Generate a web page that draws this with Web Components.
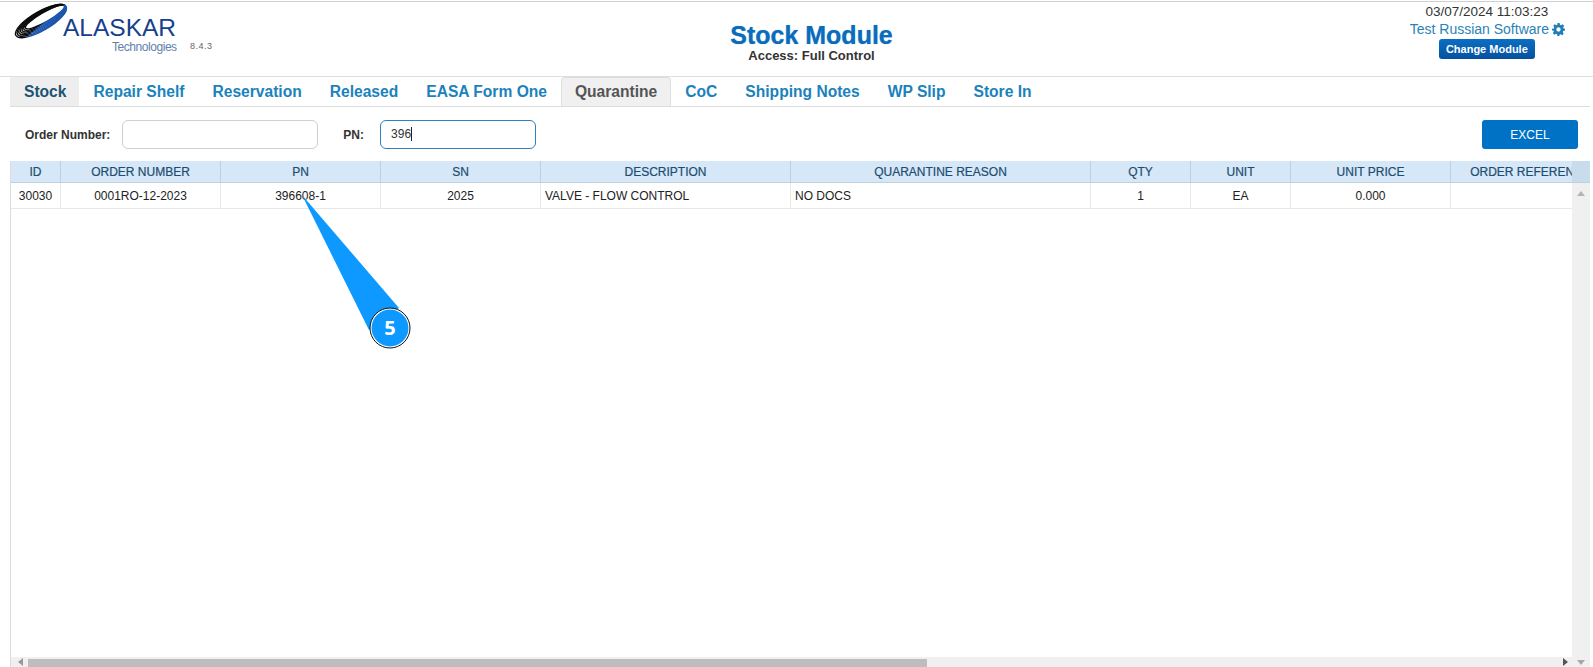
<!DOCTYPE html>
<html>
<head>
<meta charset="utf-8">
<title>Stock Module</title>
<style>
  html, body { margin: 0; height: 100%; overflow: hidden; background: #fff; }
  body { font-family: "Liberation Sans", Arial, sans-serif; position: relative; }
</style>
</head>
<body>
<stock-header></stock-header>
<tab-bar>
  <tab-item active>Stock</tab-item>
  <tab-item>Repair Shelf</tab-item>
  <tab-item>Reservation</tab-item>
  <tab-item>Released</tab-item>
  <tab-item>EASA Form One</tab-item>
  <tab-item selected>Quarantine</tab-item>
  <tab-item>CoC</tab-item>
  <tab-item>Shipping Notes</tab-item>
  <tab-item>WP Slip</tab-item>
  <tab-item>Store In</tab-item>
</tab-bar>
<filter-bar></filter-bar>
<data-grid></data-grid>
<step-callout></step-callout>

<script>
// Header: logo on the left, module title in the middle, session info on the right.
class StockHeader extends HTMLElement {
  constructor() {
    super();
    this.attachShadow({ mode: 'open' });
    // Logo rings: each one is a bit smaller and slides to the upper right.
    let rings = '';
    for (let i = 0; i < 7; i++) {
      rings += `<ellipse cx="${27 + i * 0.9}" cy="${17 - i * 0.25}" rx="${29 - i * 1.1}" ry="${9.5 - i * 0.8}"/>`;
    }
    this.shadowRoot.innerHTML = `
      <style>
        :host {
          display: grid;
          grid-template-columns: 1fr auto 1fr;
          height: 74px;
          margin-top: 1px;
          border-top: 1px solid #d0d0d0;
          border-bottom: 1px solid #dedede;
          box-sizing: content-box;
        }
        #logo { display: flex; align-items: flex-start; padding: 2px 0 0 14px; }
        #ring { flex: none; overflow: visible; }
        #brand { margin: 14px 0 0 -5px; width: 115px; }
        #name {
          font-size: 24.5px;
          line-height: 20px;
          color: #173f8c;
          font-weight: 400;
          white-space: nowrap;
        }
        #tech {
          font-size: 12px;
          line-height: 14px;
          letter-spacing: -0.45px;
          color: #5f82ab;
          margin: 2px 0 0 49px;
          white-space: nowrap;
        }
        #version { font-size: 9px; color: #666; margin: 37px 0 0 12px; letter-spacing: .5px; }
        #title { text-align: center; padding: 18px 0 0 30px; }
        #title h1 {
          margin: 0;
          font-size: 25px;
          line-height: 30px;
          font-weight: 700;
          color: #0b6cbb;
          text-shadow: 0 0 1px #6aa3d8;
        }
        #title p { margin: -2px 0 0; font-size: 13px; line-height: 15px; font-weight: 700; color: #333; }
        #session {
          justify-self: end;
          display: flex;
          flex-direction: column;
          align-items: center;
          padding: 1px 28px 0 0;
          font-size: 14px;
          line-height: 18px;
        }
        #date { color: #333; font-size: 13.5px; line-height: 17px; }
        #user { color: #2a83b5; display: flex; align-items: center; gap: 3px; padding-left: 1px; }
        #change {
          margin-top: 1px;
          width: 96px;
          height: 20px;
          border: 0;
          border-radius: 3px;
          padding: 0;
          font: 700 11px "Liberation Sans", Arial, sans-serif;
          color: #fff;
          background: linear-gradient(#0a6fc4, #07509f);
        }
      </style>
      <div id="logo">
        <svg id="ring" width="54" height="34" viewBox="0 0 54 34">
          <defs>
            <linearGradient id="g" x1="20" y1="10" x2="23" y2="26" gradientUnits="userSpaceOnUse">
              <stop offset="0.62" stop-color="#0b0b0b"/>
              <stop offset="0.72" stop-color="#1a54ad"/>
              <stop offset="1" stop-color="#1a54ad"/>
            </linearGradient>
          </defs>
          <g fill="none" stroke="url(#g)" stroke-width="1.4" transform="rotate(-30 27 17)">${rings}</g>
        </svg>
        <div id="brand">
          <div id="name">ALASKAR</div>
          <div id="tech">Technologies</div>
        </div>
        <span id="version">8.4.3</span>
      </div>
      <div id="title">
        <h1>Stock Module</h1>
        <p>Access: Full Control</p>
      </div>
      <div id="session">
        <span id="date">03/07/2024 11:03:23</span>
        <span id="user">Test Russian Software
          <svg width="13" height="13" viewBox="0 0 24 24"><path fill="#1f7db8" fill-rule="evenodd" d="M10 0h4l.7 3.3 2 .8L19.600 2.300l2.800 2.800-1.800 2.900.8 2L24 10.700v3.300l-3.400.7-.8 2 1.800 2.900-2.800 2.800-2.900-1.800-2 .8L14 24h-4l-.7-3.400-2-.8-2.900 1.800-2.800-2.800 1.800-2.900-.8-2L0 14v-3.300l3.300-.7.8-2-1.800-2.900 2.800-2.800 2.900 1.800 2-.8zM12 8a4 4 0 1 0 0 8 4 4 0 0 0 0-8z"/></svg>
        </span>
        <button id="change">Change Module</button>
      </div>
    `;
  }
}
customElements.define('stock-header', StockHeader);

// Row of module tabs, the tabs themselves come in through the slot.
class TabBar extends HTMLElement {
  constructor() {
    super();
    this.attachShadow({ mode: 'open' });
    this.shadowRoot.innerHTML = `
      <style>
        :host {
          display: flex;
          height: 29px;
          margin: 0 3px 0 10px;
          border-bottom: 1px solid #dcdcdc;
        }
      </style>
      <slot></slot>
    `;
  }
}
customElements.define('tab-bar', TabBar);

class TabItem extends HTMLElement {
  constructor() {
    super();
    this.attachShadow({ mode: 'open' });
    this.shadowRoot.innerHTML = `
      <style>
        :host {
          display: block;
          padding: 0 14px;
          font-size: 15.6px;
          font-weight: 700;
          line-height: 29px;
          color: #1b82bb;
          white-space: nowrap;
        }
        :host([active]) { background: #eeeeee; color: #1d5273; padding-right: 13px; }
        :host([selected]) {
          background: #f0f0f0;
          color: #555;
          border: 1px solid #dedede;
          border-bottom: 0;
          border-radius: 4px 4px 0 0;
          padding: 0 13px;
          line-height: 28px;
        }
      </style>
      <slot></slot>
    `;
  }
}
customElements.define('tab-item', TabItem);

// Search inputs plus the export button.
class FilterBar extends HTMLElement {
  constructor() {
    super();
    this.attachShadow({ mode: 'open' });
    this.shadowRoot.innerHTML = `
      <style>
        :host {
          display: flex;
          align-items: center;
          height: 29px;
          padding: 13px 15px 12px 25px;
          font-size: 12px;
          font-weight: 700;
          color: #333;
        }
        label { white-space: nowrap; }
        .box {
          box-sizing: border-box;
          height: 29px;
          border: 1px solid #cfcfcf;
          border-radius: 6px;
          background: #fff;
          padding: 0 10px;
          font: 400 12px/27px "Liberation Sans", Arial, sans-serif;
          color: #333;
        }
        #order { width: 196px; margin: 0 25px 0 12px; }
        #pn { width: 156px; margin-left: 16px; border-color: #2f80bd; }
        #caret { display: inline-block; width: 1px; height: 14px; background: #222; vertical-align: -3px; }
        button {
          margin-left: auto;
          width: 96px;
          height: 29px;
          border: 0;
          border-radius: 3px;
          background: #0072c6;
          color: #fff;
          font: 400 12px "Liberation Sans", Arial, sans-serif;
        }
      </style>
      <label>Order Number:</label>
      <div class="box" id="order"></div>
      <label>PN:</label>
      <div class="box" id="pn">396<span id="caret"></span></div>
      <button>EXCEL</button>
    `;
  }
}
customElements.define('filter-bar', FilterBar);

// The results grid.  Scrollbars are drawn by hand so they look like the old
// themed ones instead of whatever the browser gives.
class DataGrid extends HTMLElement {
  constructor() {
    super();
    this.attachShadow({ mode: 'open' });
    const columns = [
      ['ID', 50], ['ORDER NUMBER', 160], ['PN', 160], ['SN', 160],
      ['DESCRIPTION', 250, 'left'], ['QUARANTINE REASON', 300, 'left'],
      ['QTY', 100], ['UNIT', 100], ['UNIT PRICE', 160], ['ORDER REFERENCE', 160],
    ];
    const row = ['30030', '0001RO-12-2023', '396608-1', '2025', 'VALVE - FLOW CONTROL', 'NO DOCS', '1', 'EA', '0.000', ''];
    const tracks = columns.map((c) => c[1] + 'px').join(' ');
    const head = columns.map((c) => `<div class="th">${c[0]}</div>`).join('');
    const cells = row.map((v, i) => `<div class="td ${columns[i][2] || ''}">${v}</div>`).join('');
    this.shadowRoot.innerHTML = `
      <style>
        :host {
          display: flex;
          flex-direction: column;
          height: 506px;
          margin: 0 3px 0 10px;
          border-left: 1px solid #dcdcdc;
          font-size: 12px;
          overflow: hidden;
        }
        #top { display: flex; height: 22px; flex: none; }
        #mid { display: flex; flex: 1; min-height: 0; }
        .clip { flex: 1; min-width: 0; overflow: hidden; }
        .cols { display: grid; grid-template-columns: ${tracks}; width: max-content; }
        .th {
          background: #d6e8f7;
          color: #1d4d70;
          line-height: 22px;
          text-align: center;
          border-right: 1px solid #bcd0e0;
          border-bottom: 1px solid #bcd0e0;
          box-sizing: border-box;
          height: 22px;
          white-space: nowrap;
          overflow: hidden;
          -webkit-text-stroke: 0.2px #1d4d70;
        }
        .td {
          box-sizing: border-box;
          height: 26px;
          line-height: 26px;
          color: #222;
          text-align: center;
          border-right: 1px solid #e8e8e8;
          border-bottom: 1px solid #e8e8e8;
        }
        .td.left { text-align: left; padding-left: 4px; }
        #corner { width: 18px; background: #c8dcec; border-bottom: 1px solid #bcd0e0; box-sizing: border-box; }
        #vbar { width: 18px; background: #f0f0f0; display: flex; flex-direction: column; align-items: center; }
        #up { width: 0; height: 0; border: 4px solid transparent; border-bottom: 5px solid #b5b5b5; border-top: 0; margin-top: 8px; }
        #hbar { height: 10px; flex: none; background: #f0f0f0; display: flex; align-items: flex-end; }
        #left { width: 0; height: 0; border: 4px solid transparent; border-right: 5px solid #9a9a9a; border-left: 0; margin: 0 2px 0 7px; align-self: center; }
        #thumb { width: 899px; height: 8px; background: #bdbdbd; margin-left: 3px; }
        #right { width: 0; height: 0; border: 4px solid transparent; border-left: 5px solid #555; border-right: 0; margin-left: auto; margin-right: 9px; align-self: center; }
        #foot { width: 0; height: 0; border: 4px solid transparent; border-top: 5px solid #a8a8a8; border-bottom: 0; margin-right: 5px; align-self: center; }
      </style>
      <div id="top">
        <div class="clip"><div class="cols">${head}</div></div>
        <div id="corner"></div>
      </div>
      <div id="mid">
        <div class="clip"><div class="cols">${cells}</div></div>
        <div id="vbar"><div id="up"></div></div>
      </div>
      <div id="hbar">
        <div id="left"></div><div id="thumb"></div>
        <div id="right"></div><div id="foot"></div>
      </div>
    `;
  }
}
customElements.define('data-grid', DataGrid);

// Numbered tutorial pin that sits over the page, pointing at the PN value.
class StepCallout extends HTMLElement {
  constructor() {
    super();
    this.attachShadow({ mode: 'open' });
    this.shadowRoot.innerHTML = `
      <style>
        :host { display: block; position: absolute; left: 295px; top: 190px; width: 120px; height: 165px; }
        svg { display: block; }
        text { font: 700 20px "Open Sans", "Liberation Sans", sans-serif; fill: #fff; }
      </style>
      <svg width="120" height="165" viewBox="0 0 120 165">
        <path d="M7 5L104 118L74 140Z" fill="#0d99ff"/>
        <circle cx="95" cy="138" r="20" fill="#fff" stroke="#111" stroke-width="1"/>
        <circle cx="95" cy="138" r="18.5" fill="#0d99ff"/>
        <text x="95" y="145" text-anchor="middle">5</text>
      </svg>
    `;
  }
}
customElements.define('step-callout', StepCallout);
</script>
</body>
</html>
